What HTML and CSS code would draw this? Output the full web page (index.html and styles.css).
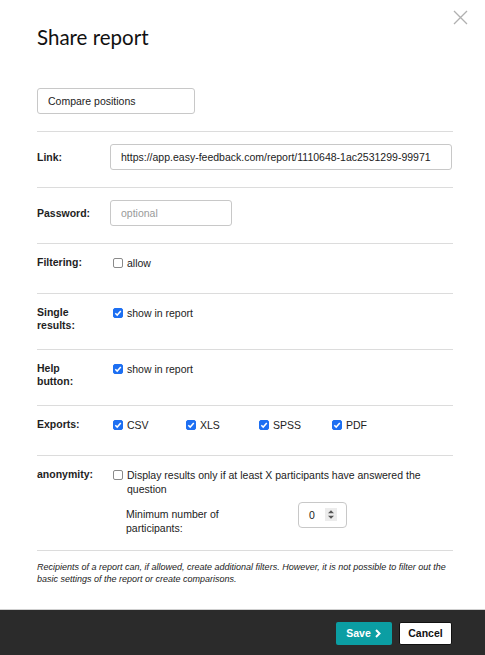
FILE: index.html
```html
<!DOCTYPE html>
<html lang="en">
<head>
<meta charset="utf-8">
<title>Share report</title>
<link rel="stylesheet" href="styles.css">
</head>
<body>
<div class="modal">
  <button class="close" aria-label="Close">
    <svg width="15" height="15" viewBox="0 0 15 15"><path d="M1 1L14 14M14 1L1 14" stroke="#b0b0b0" stroke-width="1.3" fill="none"/></svg>
  </button>
  <h1 class="title">Share report</h1>
  <div class="name-wrap">
    <input class="field name-field" type="text" value="Compare positions">
  </div>

  <div class="row row--center">
    <div class="label">Link:</div>
    <div class="value"><input class="field link-field" type="text" value="https://app.easy-feedback.com/report/1110648-1ac2531299-99971"></div>
  </div>

  <div class="row row--center">
    <div class="label">Password:</div>
    <div class="value"><input class="field pass-field" type="text" placeholder="optional"></div>
  </div>

  <div class="row">
    <div class="label">Filtering:</div>
    <div class="value"><label class="check"><span class="cb"></span><span class="check-text">allow</span></label></div>
  </div>

  <div class="row">
    <div class="label">Single<br>results:</div>
    <div class="value"><label class="check"><span class="cb cb--on"><svg viewBox="0 0 10 10"><path d="M2.3 5.2L4.2 7.1L7.8 2.9" stroke="#fff" stroke-width="1.5" fill="none"/></svg></span><span class="check-text">show in report</span></label></div>
  </div>

  <div class="row">
    <div class="label">Help<br>button:</div>
    <div class="value"><label class="check"><span class="cb cb--on"><svg viewBox="0 0 10 10"><path d="M2.3 5.2L4.2 7.1L7.8 2.9" stroke="#fff" stroke-width="1.5" fill="none"/></svg></span><span class="check-text">show in report</span></label></div>
  </div>

  <div class="row">
    <div class="label">Exports:</div>
    <div class="value exports">
      <label class="check export"><span class="cb cb--on"><svg viewBox="0 0 10 10"><path d="M2.3 5.2L4.2 7.1L7.8 2.9" stroke="#fff" stroke-width="1.5" fill="none"/></svg></span><span class="check-text">CSV</span></label>
      <label class="check export"><span class="cb cb--on"><svg viewBox="0 0 10 10"><path d="M2.3 5.2L4.2 7.1L7.8 2.9" stroke="#fff" stroke-width="1.5" fill="none"/></svg></span><span class="check-text">XLS</span></label>
      <label class="check export"><span class="cb cb--on"><svg viewBox="0 0 10 10"><path d="M2.3 5.2L4.2 7.1L7.8 2.9" stroke="#fff" stroke-width="1.5" fill="none"/></svg></span><span class="check-text">SPSS</span></label>
      <label class="check export"><span class="cb cb--on"><svg viewBox="0 0 10 10"><path d="M2.3 5.2L4.2 7.1L7.8 2.9" stroke="#fff" stroke-width="1.5" fill="none"/></svg></span><span class="check-text">PDF</span></label>
    </div>
  </div>

  <div class="row row--anon">
    <div class="label">anonymity:</div>
    <div class="value">
      <label class="check"><span class="cb"></span><span class="check-text">Display results only if at least X participants have answered the question</span></label>
      <div class="min-block">
        <div class="min-label">Minimum number of participants:</div>
        <div class="number">
          <span class="number-val">0</span>
          <span class="spinner"><svg width="12" height="13" viewBox="0 0 12 13"><path d="M3 5.3L6 2.3L9 5.3Z M3 7.7L6 10.7L9 7.7Z" fill="#555"/></svg></span>
        </div>
      </div>
    </div>
  </div>

  <p class="note">Recipients of a report can, if allowed, create additional filters. However, it is not possible to filter out the basic settings of the report or create comparisons.</p>
</div>
<footer class="footer">
  <button class="btn btn--save">Save <svg width="8" height="9" viewBox="0 0 8 9"><path d="M2 1L5.5 4.5L2 8" stroke="#fff" stroke-width="2" fill="none"/></svg></button>
  <button class="btn btn--cancel">Cancel</button>
</footer>
</body>
</html>
```

FILE: styles.css
```css
* { box-sizing: border-box; }

html, body {
  margin: 0;
  padding: 0;
  background: #fff;
}

body {
  font-family: "Liberation Sans", Arial, sans-serif;
  color: #222;
  font-size: 10.5px;
}

.modal {
  position: relative;
  padding: 24px 32px 24px 37px;
}

.close {
  position: absolute;
  top: 10px;
  right: 17px;
  width: 15px;
  height: 15px;
  padding: 0;
  border: 0;
  background: none;
  line-height: 0;
}

.title {
  font-family: Lato, "Liberation Sans", sans-serif;
  font-weight: 400;
  font-size: 20.5px;
  line-height: 26px;
  color: #111;
  margin: 0 0 38px;
}

.name-wrap {
  padding-bottom: 17px;
}

.field {
  display: block;
  height: 26px;
  border: 1px solid #c8c8c8;
  border-radius: 3px;
  font-family: "Liberation Sans", Arial, sans-serif;
  font-size: 10.5px;
  color: #222;
  background: #fff;
  padding: 0 10px;
  margin: 0;
  outline: none;
}

.field::placeholder { color: #9a9a9a; }

.name-field { width: 158px; }
.link-field { width: 342px; }
.pass-field { width: 122px; }

.row {
  display: grid;
  grid-template-columns: 73px 1fr;
  border-top: 1px solid #dcdcdc;
  padding: 12px 0 17px;
  min-height: 50px;
  align-items: start;
}

.row--center { align-items: center; }

.row--anon { padding-bottom: 15px; }

.label {
  font-weight: 700;
  font-size: 10.5px;
  line-height: 13px;
  color: #1e1e1e;
}

.check {
  display: flex;
  align-items: flex-start;
  gap: 4px;
  padding-left: 3px;
  font-size: 10.5px;
  line-height: 14px;
  color: #222;
  margin-top: -0.5px;
}

.cb {
  flex: none;
  width: 10px;
  height: 10px;
  margin-top: 2.5px;
  border: 1px solid #8a8a8a;
  border-radius: 2px;
  background: #fff;
  line-height: 0;
}

.cb--on {
  background: #1d6ff2;
  border-color: #1d6ff2;
}

.cb svg {
  width: 10px;
  height: 10px;
  margin: -1px 0 0 -1px;
}

.exports {
  display: flex;
}

.export { width: 73px; }

.min-block {
  display: flex;
  align-items: flex-start;
  gap: 40px;
  margin-top: 6px;
  padding-left: 16px;
}

.min-label {
  width: 132px;
  padding-top: 5px;
  line-height: 14px;
  font-size: 10.5px;
  color: #222;
}

.number {
  display: flex;
  align-items: center;
  width: 49px;
  height: 26px;
  border: 1px solid #c8c8c8;
  border-radius: 4px;
  padding-left: 10px;
  font-size: 10.5px;
}

.number-val { width: 16px; }

.spinner {
  display: flex;
  align-items: center;
  justify-content: center;
  width: 12px;
  height: 13px;
  background: #ececec;
}

.note {
  border-top: 1px solid #dcdcdc;
  margin: 0;
  padding-top: 10px;
  font-style: italic;
  font-size: 9px;
  line-height: 12px;
  color: #222;
}

.footer {
  height: 46px;
  background: #2b2b2b;
  border-top: 1px solid #cfcfcf;
  display: flex;
  justify-content: flex-end;
  align-items: flex-start;
  gap: 7px;
  padding: 12px 33px 0 0;
}

.btn {
  height: 23px;
  border-radius: 2px;
  font-family: "Liberation Sans", Arial, sans-serif;
  font-weight: 700;
  font-size: 10.5px;
  padding: 0;
  display: flex;
  align-items: center;
  justify-content: center;
}

.btn--save {
  width: 56px;
  background: #0b9ea3;
  color: #fff;
  border: 0;
  gap: 3px;
}

.btn--cancel {
  width: 53px;
  background: #fff;
  color: #111;
  border: 1px solid #111;
}
```
